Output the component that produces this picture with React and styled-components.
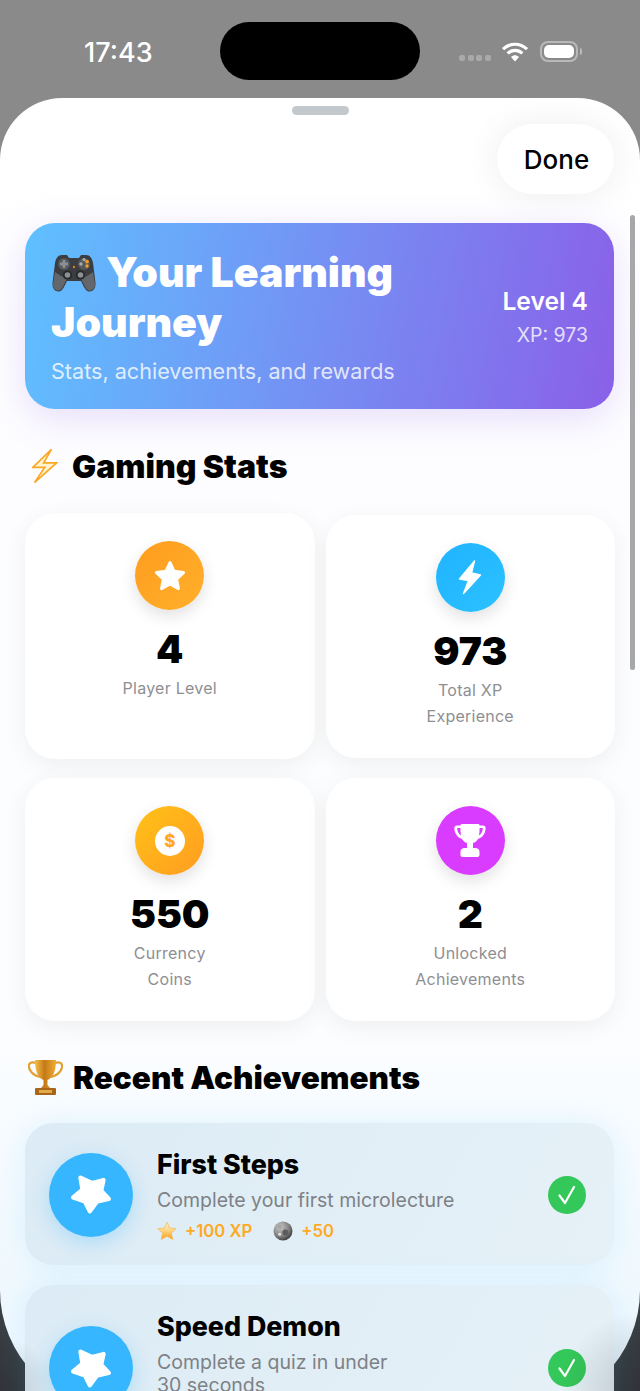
import React from 'react';
import styled, { createGlobalStyle } from 'styled-components';

const GlobalStyle = createGlobalStyle`
	html, body {
		margin: 0;
		height: 1391px;
		overflow: hidden;
		background: linear-gradient(#8a8a8a 0, #8a8a8a 1230px, #3d4147 1295px, #33363b 1391px);
		font-family: 'Inter', 'Liberation Sans', sans-serif;
	}
`;

const stats = [
	{ value: '4', label: 'Player Level', bg: 'linear-gradient(135deg, #ff9c1f, #ffb02b)', icon: 'star', tall: true },
	{ value: '973', label: 'Total XP', sub: 'Experience', bg: 'linear-gradient(135deg, #1fb4ff, #2cc1ff)', icon: 'bolt' },
	{ value: '550', label: 'Currency', sub: 'Coins', bg: 'linear-gradient(135deg, #ffc216, #ff9c22)', icon: 'coin' },
	{ value: '2', label: 'Unlocked', sub: 'Achievements', bg: '#da3cff', icon: 'trophy' },
];

const achievements = [
	{ title: 'First Steps', desc: 'Complete your first microlecture', rewards: true },
	{ title: 'Speed Demon', desc: 'Complete a quiz in under\n30 seconds', rewards: true },
];

function WifiIcon () {
	return (
		<svg width="26" height="20" viewBox="0 0 26 20">
			<path d="M1 7.2 C8 .6 18 .6 25 7.2" fill="none" stroke="#fff" strokeWidth="3.2" />
			<path d="M5.6 11.4 C10 7.4 16 7.4 20.4 11.4" fill="none" stroke="#fff" strokeWidth="3.2" />
			<path d="M9 15 C11.6 12.8 14.4 12.8 17 15 L13 19.6 Z" fill="#fff" />
		</svg>
	);
}

function StarIcon () {
	return (
		<svg width="36" height="36" viewBox="0 0 24 24">
			<path
				d="M12 3 L14.7 8.9 L21 9.7 L16.4 14.1 L17.6 20.4 L12 17.3 L6.4 20.4 L7.6 14.1 L3 9.7 L9.3 8.9 Z"
				fill="#fff"
				stroke="#fff"
				strokeWidth="2"
				strokeLinejoin="round"
			/>
		</svg>
	);
}

function TiltedStar () {
	return (
		<svg width="47" height="45" viewBox="115 95 140 135">
			<path
				d="M152 112 L186 128 L221 119 L214 151 L237 176 L201 184 L180 213 L165 183 L130 171 L158 148 Z"
				fill="#fff"
				stroke="#fff"
				strokeWidth="13"
				strokeLinejoin="round"
			/>
		</svg>
	);
}

function BoltIcon () {
	return (
		<svg width="24" height="36" viewBox="0 0 24 36">
			<path d="M16.5 2 L1.5 20 L10.5 21.5 L5.5 34.5 L22.5 16 L13.5 14 Z" fill="#fff" stroke="#fff" strokeWidth="1.4" strokeLinejoin="round" />
		</svg>
	);
}

function TrophyIcon () {
	return (
		<svg width="32" height="33" viewBox="0 0 32 33">
			<path
				d="M8 0 H24 C25 0 25.6 .6 25.7 1.5 H29 C30.6 1.5 31.6 2.6 31.6 4 C31.6 9.6 28.4 13.6 24 15 C22.6 17.4 20.8 18.6 19 19 V24 H21 C24 24 25.5 25.5 25.5 28 V31 C25.5 32.2 24.7 33 23.5 33 H8.5 C7.3 33 6.5 32.2 6.5 31 V28 C6.5 25.5 8 24 11 24 H13 V19 C11.2 18.6 9.4 17.4 8 15 C3.6 13.6 .4 9.6 .4 4 C.4 2.6 1.4 1.5 3 1.5 H6.3 C6.4 .6 7 0 8 0 Z M3.2 4 C3.2 7.6 4.8 10 7 11.6 C6.6 9.2 6.4 6.8 6.4 4 Z M28.8 4 H25.6 C25.6 6.8 25.4 9.2 25 11.6 C27.2 10 28.8 7.6 28.8 4 Z"
				fill="#fff"
				fillRule="evenodd"
			/>
		</svg>
	);
}

function GamepadEmoji () {
	return (
		<Emoji width="44" height="38" viewBox="0 0 44 38">
			<path d="M10 1 H15 L17 4 H27 L29 1 H34 C38 1 40 4 41 9 L43.5 29 C44 34 41 37.5 37.5 37.5 C34.5 37.5 33 35 31 31 L29 27 H15 L13 31 C11 35 9.5 37.5 6.5 37.5 C3 37.5 0 34 .5 29 L3 9 C4 4 6 1 10 1 Z" fill="#3b3d40" />
			<path d="M3 18 L1 30 C.7 34 3.4 36.6 6.5 36.6 C9 36.6 10.6 34 12 30.6 L15 25 L9 22 Z M41 18 L43 30 C43.3 34 40.6 36.6 37.5 36.6 C35 36.6 33.4 34 32 30.6 L29 25 L35 22 Z" fill="#63666a" />
			<circle cx="12" cy="10" r="6" fill="#55585c" />
			<path d="M10.6 6 H13.4 V8.6 H16 V11.4 H13.4 V14 H10.6 V11.4 H8 V8.6 H10.6 Z" fill="#8b8e92" />
			<circle cx="32" cy="10" r="6" fill="#55585c" />
			<circle cx="35" cy="7.6" r="1.9" fill="#f39a1a" />
			<circle cx="32" cy="5.6" r="1.6" fill="#a9acaf" />
			<circle cx="35" cy="12" r="1.7" fill="#f0a12c" />
			<circle cx="29" cy="10" r="1.7" fill="#a9acaf" />
			<circle cx="22" cy="13" r="1.2" fill="#d8801c" />
			<circle cx="15.5" cy="21" r="4.6" fill="#26282a" />
			<circle cx="15.5" cy="21" r="2.8" fill="#8d9093" />
			<circle cx="28.5" cy="21" r="4.6" fill="#26282a" />
			<circle cx="28.5" cy="21" r="2.8" fill="#8d9093" />
		</Emoji>
	);
}

function BoltEmoji () {
	return (
		<HeadingEmoji width="26" height="36" viewBox="38 28 76 106">
			<path d="M95 32 L40 85 L75 85 L45 130 L110 72 L72 72 Z" fill="#fff4cf" stroke="#f9a825" strokeWidth="5" strokeLinejoin="miter" />
		</HeadingEmoji>
	);
}

function TrophyEmoji () {
	return (
		<HeadingEmoji width="35" height="36" viewBox="0 0 35 36">
			<defs>
				<linearGradient id="cup" x1="0" x2="1" y1="0" y2="0">
					<stop offset="0" stopColor="#f6bd48" />
					<stop offset=".45" stopColor="#c47a18" />
					<stop offset="1" stopColor="#f0ac34" />
				</linearGradient>
			</defs>
			<path d="M8 4 C1 2 0 6 1.5 10 C3.5 15 8 17 12 18 M27 4 C34 2 35 6 33.5 10 C31.5 15 27 17 23 18" fill="none" stroke="#e2a032" strokeWidth="2.2" />
			<path d="M7 1 H28 C28 12 25 19 19.5 21 V26 L23 30 H12 L15.5 26 V21 C10 19 7 12 7 1 Z" fill="url(#cup)" />
			<rect x="7" y="29" width="21" height="7" rx="1" fill="#a9661a" />
			<rect x="11" y="31" width="13" height="3" fill="#e2aa48" />
		</HeadingEmoji>
	);
}

function SmallStarEmoji () {
	return (
		<svg width="20" height="20" viewBox="0 0 24 24">
			<defs>
				<linearGradient id="gold" x1="0" x2="0" y1="0" y2="1">
					<stop offset="0" stopColor="#fff0c4" />
					<stop offset=".45" stopColor="#ffd98a" />
					<stop offset="1" stopColor="#fb9c14" />
				</linearGradient>
			</defs>
			<path d="M12 1.5 L15.2 8.4 L23 9.3 L17.2 14.5 L18.9 22.2 L12 18.2 L5.1 22.2 L6.8 14.5 L1 9.3 L8.8 8.4 Z" fill="url(#gold)" stroke="#f6b347" strokeWidth=".8" strokeLinejoin="round" />
		</svg>
	);
}

function MoonEmoji () {
	return (
		<svg width="20" height="20" viewBox="0 0 21 21">
			<defs>
				<radialGradient id="moon" cx=".35" cy=".3" r=".8">
					<stop offset="0" stopColor="#c9c9c9" />
					<stop offset=".6" stopColor="#7e7e7e" />
					<stop offset="1" stopColor="#2f2f2f" />
				</radialGradient>
			</defs>
			<circle cx="10.5" cy="10.5" r="10" fill="url(#moon)" />
			<circle cx="7" cy="6" r="2.4" fill="#a6a6a6" />
			<circle cx="13" cy="12" r="3" fill="#5b5b5b" />
			<circle cx="7" cy="14" r="1.6" fill="#e0e0e0" />
		</svg>
	);
}

function CheckBadge () {
	return (
		<Check>
			<svg width="22" height="22" viewBox="0 0 22 22">
				<path d="M3.5 11.5 L9 19 L18 3" fill="none" stroke="#fff" strokeWidth="2.2" strokeLinecap="round" strokeLinejoin="round" />
			</svg>
		</Check>
	);
}

function StatGlyph ({ icon }) {
	if (icon === 'star') return <StarIcon />;
	if (icon === 'bolt') return <BoltIcon />;
	if (icon === 'trophy') return <TrophyIcon />;
	return <Coin>$</Coin>;
}

export default function App () {
	return (
		<Screen>
			<GlobalStyle />
			<StatusBar>
				<Clock>17:43</Clock>
				<Island />
				<StatusIcons>
					<Signal><i /><i /><i /><i /></Signal>
					<WifiIcon />
					<Battery><BatteryFill /></Battery>
				</StatusIcons>
			</StatusBar>

			<Sheet>
				<ScrollThumb />
				<Grabber />
				<TopRow>
					<DoneButton>Done</DoneButton>
				</TopRow>

				<Content>
					<Hero>
						<HeroText>
							<HeroTitle><GamepadEmoji /> Your Learning Journey</HeroTitle>
							<HeroSub>Stats, achievements, and rewards</HeroSub>
						</HeroText>
						<HeroLevel>
							<LevelText>Level 4</LevelText>
							<XpText>XP: 973</XpText>
						</HeroLevel>
					</Hero>

					<Heading><BoltEmoji />Gaming Stats</Heading>
					<StatsGrid>
						{stats.map(s => (
							<StatCard key={s.label} $tall={s.tall}>
								<StatCircle $bg={s.bg}><StatGlyph icon={s.icon} /></StatCircle>
								<StatValue>{s.value}</StatValue>
								<StatLabel>{s.label}</StatLabel>
								{s.sub && <StatLabel $light>{s.sub}</StatLabel>}
							</StatCard>
						))}
					</StatsGrid>

					<Heading $second><TrophyEmoji />Recent Achievements</Heading>
					<AchievementList>
						{achievements.map(a => (
							<Achievement key={a.title}>
								<AchievementCircle><TiltedStar /></AchievementCircle>
								<AchievementBody>
									<AchievementTitle>{a.title}</AchievementTitle>
									<AchievementDesc>{a.desc}</AchievementDesc>
									<Rewards>
										<Reward><SmallStarEmoji />+100 XP</Reward>
										<Reward><MoonEmoji />+50</Reward>
									</Rewards>
								</AchievementBody>
								<CheckBadge />
							</Achievement>
						))}
					</AchievementList>
				</Content>
			</Sheet>
			<CornerShade />
		</Screen>
	);
}

const Screen = styled.div`
	position: relative;
	width: 640px;
	height: 1391px;
	overflow: hidden;
`;

const CornerShade = styled.div`
	position: absolute;
	left: 0;
	right: 0;
	bottom: 0;
	height: 80px;
	background:
		radial-gradient(circle at 0 100%, rgba(40, 45, 50, .2), transparent 55px),
		radial-gradient(circle at 100% 100%, rgba(40, 45, 50, .22), transparent 80px);
`;

const StatusBar = styled.div`
	height: 98px;
	display: flex;
	align-items: flex-start;
	padding-left: 84px;
	box-sizing: border-box;
`;

const Clock = styled.div`
	width: 136px;
	margin-top: 36px;
	font-size: 27px;
	line-height: 33px;
	font-weight: 500;
	color: #fff;
`;

const Island = styled.div`
	width: 200px;
	height: 58px;
	margin-top: 22px;
	border-radius: 29px;
	background: #000;
`;

const StatusIcons = styled.div`
	display: flex;
	align-items: center;
	margin: 41px 0 0 39px;
	height: 21px;
`;

const Signal = styled.div`
	display: flex;
	gap: 2.5px;
	margin: 12px 11px 0 0;

	i {
		width: 6px;
		height: 6px;
		border-radius: 2px;
		background: #a9a9a9;
	}
`;

const Battery = styled.div`
	position: relative;
	width: 38px;
	height: 21px;
	margin-left: 12px;
	box-sizing: border-box;
	border: 2px solid #b9b9b9;
	border-radius: 8px;
	padding: 2px;

	&::after {
		content: '';
		position: absolute;
		right: -6px;
		top: 5px;
		width: 2px;
		height: 7px;
		border-radius: 0 2px 2px 0;
		background: #b9b9b9;
	}
`;

const BatteryFill = styled.div`
	height: 100%;
	border-radius: 5px;
	background: #fff;
`;

const Sheet = styled.div`
	position: relative;
	height: 1312px;
	background: linear-gradient(#ffffff, #fdfdff 400px, #fbfdff 950px, #eff8fe 1200px);
	border-radius: 62px 62px 120px 120px;
`;

const ScrollThumb = styled.div`
	position: absolute;
	top: 117px;
	right: 5px;
	width: 5px;
	height: 455px;
	border-radius: 3px;
	background: #a7a7a9;
`;

const Grabber = styled.div`
	width: 57px;
	height: 9px;
	margin: 0 auto;
	position: relative;
	top: 8px;
	border-radius: 5px;
	background: #c3c8cc;
`;

const TopRow = styled.div`
	display: flex;
	justify-content: flex-end;
	padding: 17px 26px 0 0;
`;

const DoneButton = styled.div`
	width: 117px;
	height: 70px;
	box-sizing: border-box;
	padding-left: 2px;
	display: flex;
	align-items: center;
	justify-content: center;
	border-radius: 35px;
	background: #fff;
	box-shadow: 0 0 34px rgba(0, 0, 0, .07);
	font-size: 26px;
	font-weight: 500;
	color: #000;
`;

const Content = styled.div`
	padding: 29px 25px 0;
`;

const Hero = styled.div`
	height: 186px;
	margin-right: 1px;
	box-sizing: border-box;
	display: flex;
	align-items: center;
	justify-content: space-between;
	padding: 0 26px;
	border-radius: 30px;
	background: linear-gradient(100deg, #5fc0ff, #8a60e8);
	box-shadow: 0 10px 38px rgba(138, 96, 232, .2);
	color: #fff;
`;

const HeroText = styled.div`
	width: 370px;
`;

const HeroTitle = styled.div`
	font-size: 41px;
	line-height: 50px;
	font-weight: 900;
`;

const Emoji = styled.svg`
	margin: 0 2px 0 1px;
	vertical-align: -5px;
`;

const HeroSub = styled.div`
	margin-top: 10px;
	font-size: 21.6px;
	line-height: 28px;
	white-space: nowrap;
	color: rgba(255, 255, 255, .8);
`;

const HeroLevel = styled.div`
	text-align: right;
`;

const LevelText = styled.div`
	font-size: 24.6px;
	line-height: 30px;
	font-weight: 600;
`;

const XpText = styled.div`
	margin-top: 7px;
	font-size: 19.5px;
	line-height: 24px;
	color: rgba(255, 255, 255, .8);
`;

const Heading = styled.div`
	display: flex;
	align-items: center;
	gap: ${p => (p.$second ? '10px' : '14px')};
	margin: ${p => (p.$second ? '36px 0 26px 3px' : '37px 0 27px 7px')};
	height: 40px;
	font-size: ${p => (p.$second ? '31.5px' : '32px')};
	font-weight: 900;
	color: #000;
`;

const HeadingEmoji = styled.svg`
	flex: none;
`;

const StatsGrid = styled.div`
	display: grid;
	grid-template-columns: 1fr 1fr;
	column-gap: 11px;
	row-gap: 19px;
	align-items: center;
`;

const StatCard = styled.div`
	height: ${p => (p.$tall ? '246px' : '243px')};
	box-sizing: border-box;
	padding-top: 28px;
	display: flex;
	flex-direction: column;
	align-items: center;
	border-radius: 30px;
	background: #fff;
	box-shadow: 0 6px 24px rgba(0, 0, 0, .06);
`;

const StatCircle = styled.div`
	width: 69px;
	height: 69px;
	flex: none;
	display: flex;
	align-items: center;
	justify-content: center;
	border-radius: 50%;
	background: ${p => p.$bg};
	box-shadow: 0 6px 16px rgba(0, 0, 0, .12);
`;

const Coin = styled.div`
	width: 30px;
	height: 30px;
	display: flex;
	align-items: center;
	justify-content: center;
	border-radius: 50%;
	background: #fff;
	font-size: 17px;
	font-weight: 800;
	color: #ffa81f;
`;

const StatValue = styled.div`
	margin-top: 15px;
	font-size: 39px;
	line-height: 48px;
	font-weight: 900;
	color: #000;
`;

const StatLabel = styled.div`
	margin-top: 5px;
	font-size: 16px;
	line-height: 21px;
	letter-spacing: .25px;
	color: #8e8e93;
`;

const AchievementList = styled.div`
	display: flex;
	flex-direction: column;
	gap: 20px;
	margin-right: 1px;
`;

const Achievement = styled.div`
	display: flex;
	align-items: center;
	padding: 25px 28px 24px 24px;
	box-sizing: border-box;
	border-radius: 28px;
	background: linear-gradient(120deg, #dcebf5, #e6f1f7);
	box-shadow: 0 0 30px rgba(90, 190, 255, .16);
`;

const AchievementCircle = styled.div`
	width: 84px;
	height: 84px;
	flex: none;
	display: flex;
	align-items: center;
	justify-content: center;
	border-radius: 50%;
	background: #35b6ff;
	box-shadow: 0 6px 20px rgba(53, 182, 255, .3);
`;

const AchievementBody = styled.div`
	flex: 1;
	margin-left: 24px;
`;

const AchievementTitle = styled.div`
	font-size: 26.8px;
	line-height: 32px;
	font-weight: 800;
	color: #000;
`;

const AchievementDesc = styled.div`
	margin-top: 9px;
	font-size: 19.5px;
	line-height: 23px;
	white-space: pre-line;
	color: #7d8185;
`;

const Rewards = styled.div`
	display: flex;
	gap: 21px;
	margin-top: 9px;
`;

const Reward = styled.div`
	display: flex;
	align-items: center;
	gap: 8px;
	font-size: 16.7px;
	line-height: 20px;
	font-weight: 600;
	color: #ffa91f;
`;

const Check = styled.div`
	width: 38px;
	height: 38px;
	flex: none;
	display: flex;
	align-items: center;
	justify-content: center;
	border-radius: 50%;
	background: #34c759;
`;
